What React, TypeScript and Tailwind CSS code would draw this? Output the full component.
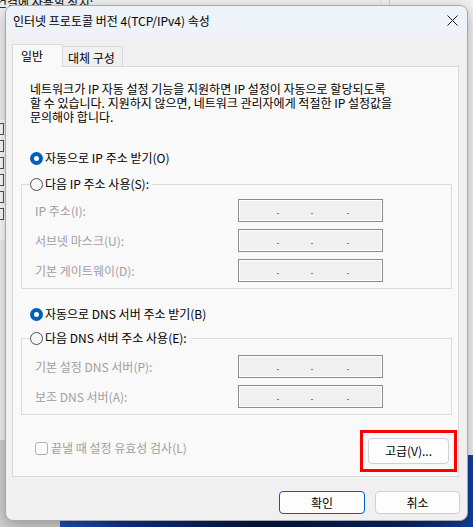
const font = "font-['Noto_Sans_CJK_KR','Noto_Sans',sans-serif]";

function Radio({ checked }: { checked: boolean }) {
  if (checked) {
    return (
      <span className="flex h-[13px] w-[13px] shrink-0 items-center justify-center rounded-full bg-[#005fb8]">
        <span className="h-[5px] w-[5px] rounded-full bg-white" />
      </span>
    );
  }
  return <span className="h-[13px] w-[13px] shrink-0 rounded-full border border-[#505050] bg-[#f6f6f6]" />;
}

function IpBox() {
  return (
    <div className="flex h-[23px] w-[145px] items-end border border-[#8c8c8c] bg-[#f0f0f0] pb-[7px] shadow-[inset_0_0_0_1px_#ffffff]">
      <span className="ml-[38px] h-[1px] w-[2px] bg-[#7d7d7d]" />
      <span className="ml-[32px] h-[1px] w-[2px] bg-[#7d7d7d]" />
      <span className="ml-[34px] h-[1px] w-[2px] bg-[#7d7d7d]" />
    </div>
  );
}

function Field({ label }: { label: string }) {
  return (
    <div className="flex h-[23px] items-center">
      <span className="w-[203px] whitespace-nowrap text-[#a0a0a0]">{label}</span>
      <IpBox />
    </div>
  );
}

function Legend({ text }: { text: string }) {
  return (
    <div className="relative z-10 ml-[17px] flex h-[16px]">
      <span className="inline-flex items-center gap-[2px] bg-[#f9f9f9] pr-[3px]">
        <Radio checked={false} />
        <span className="whitespace-nowrap">{text}</span>
      </span>
    </div>
  );
}

function Button({ label, primary }: { label: string; primary?: boolean }) {
  return (
    <button
      className={
        primary
          ? "h-[23px] w-[86px] rounded-[4px] border border-[#005fb8] bg-[#fdfdfd] text-[12px] leading-none text-black"
          : "h-[23px] w-[85px] rounded-[4px] border border-[#d0d0d0] bg-[#fdfdfd] text-[12px] leading-none text-black"
      }
    >
      {label}
    </button>
  );
}

export default function App() {
  return (
    <div className={`relative h-[527px] w-[473px] overflow-hidden bg-[#f3f3f3] text-[12px] text-black ${font}`}>
      {/* 바탕화면 / 뒤 창 */}
      <div className="absolute left-0 top-[455px] h-[72px] w-[473px] bg-[linear-gradient(90deg,#1d4fc0_60px,#0d2f86_140px,#07153d_260px,#0a2466_400px,#133f9e_473px)]" />
      <div className="absolute left-0 top-[440px] h-[87px] w-[60px] bg-[#d2d2d2]" />
      <div className="absolute left-[380px] top-0 h-[10px] w-[1px] bg-[#e2e2e2]" />
      <div className="absolute left-[389px] top-0 h-[10px] w-[1px] bg-[#cfcfcf]" />
      <div className="absolute left-[-4px] top-[-7px] whitespace-nowrap">연결에 사용할 장치:</div>
      <div className="absolute left-0 top-[120px] flex h-[120px] w-[6px] flex-col gap-[5px] bg-white pt-[3px]">
        {[0, 1, 2, 3, 4, 5].map((i) => (
          <span key={i} className="ml-[-6px] h-[12px] w-[10px] border border-[#555]" />
        ))}
      </div>

      {/* 대화상자 */}
      <div className="absolute left-[5px] top-[5px] flex h-[516px] w-[463px] flex-col overflow-hidden rounded-[8px] border border-[#a8a8a8] bg-[#f0f0f0] shadow-[0_4px_16px_rgba(0,0,0,0.3)]">
        <div className="flex h-[30px] shrink-0 items-center justify-between bg-[#eef2f9] pl-[7px] pr-[9px]">
          <span className="whitespace-nowrap">인터넷 프로토콜 버전 4(TCP/IPv4) 속성</span>
          <svg width="11" height="11" viewBox="0 0 11 11" className="mt-[-2px]">
            <path d="M0.5 0.5 L10.5 10.5 M10.5 0.5 L0.5 10.5" stroke="#1a1a1a" strokeWidth="1" />
          </svg>
        </div>

        <div className="flex flex-col pl-[6px] pt-[8px]">
          <div className="flex h-[22px] items-end">
            <div className="relative z-10 -mb-px h-[23px] w-[51px] border-l border-r border-t border-[#d9d9d9] bg-[#f9f9f9] pl-[8px] pt-[2px]">
              일반
            </div>
            <div className="h-[20px] w-[60px] border-r border-t border-[#d9d9d9] bg-[#f0f0f0] pl-[5px] pt-[2px]">
              대체 구성
            </div>
          </div>

          <div className="flex h-[411px] w-[447px] flex-col border border-[#d9d9d9] bg-[#f9f9f9]">
            <p className="ml-[17px] mt-[15px] whitespace-nowrap leading-[14px]">
              네트워크가 IP 자동 설정 기능을 지원하면 IP 설정이 자동으로 할당되도록
              <br />할 수 있습니다. 지원하지 않으면, 네트워크 관리자에게 적절한 IP 설정값을
              <br />문의해야 합니다.
            </p>

            <div className="ml-[17px] mt-[26px] flex h-[16px] items-center gap-[2px]">
              <Radio checked />
              <span>자동으로 IP 주소 받기(O)</span>
            </div>

            <div className="mt-[10px]">
              <Legend text="다음 IP 주소 사용(S):" />
            </div>
            <div className="-mt-[8px] ml-[8px] mr-[6px] flex flex-col gap-[7px] border border-[#dcdcdc] pb-[6px] pl-[13px] pt-[14px]">
              <Field label="IP 주소(I):" />
              <Field label="서브넷 마스크(U):" />
              <Field label="기본 게이트웨이(D):" />
            </div>

            <div className="ml-[17px] mt-[17px] flex h-[16px] items-center gap-[2px]">
              <Radio checked />
              <span>자동으로 DNS 서버 주소 받기(B)</span>
            </div>

            <div className="mt-[8px]">
              <Legend text="다음 DNS 서버 주소 사용(E):" />
            </div>
            <div className="-mt-[8px] ml-[8px] mr-[6px] flex flex-col gap-[7px] border border-[#dcdcdc] pb-[6px] pl-[13px] pt-[16px]">
              <Field label="기본 설정 DNS 서버(P):" />
              <Field label="보조 DNS 서버(A):" />
            </div>

            <div className="mt-[15px] flex items-start justify-between pl-[22px] pr-[1px]">
              <div className="mt-[9px] flex items-center gap-[3px] text-[#a0a0a0]">
                <span className="h-[13px] w-[13px] rounded-[3px] border border-[#b0b0b0] bg-[#fbfbfb]" />
                <span>끝낼 때 설정 유효성 검사(L)</span>
              </div>
              <div className="border-[3px] border-[#ff0000] p-[5px]">
                <button className="h-[26px] w-[81px] rounded-[4px] border border-[#d0d0d0] bg-[#fdfdfd] text-[12px] leading-none">
                  고급(V)...
                </button>
              </div>
            </div>
          </div>

          <div className="mt-[14px] flex justify-end gap-[10px] pr-[7px]">
            <Button label="확인" primary />
            <Button label="취소" />
          </div>
        </div>
      </div>
    </div>
  );
}
